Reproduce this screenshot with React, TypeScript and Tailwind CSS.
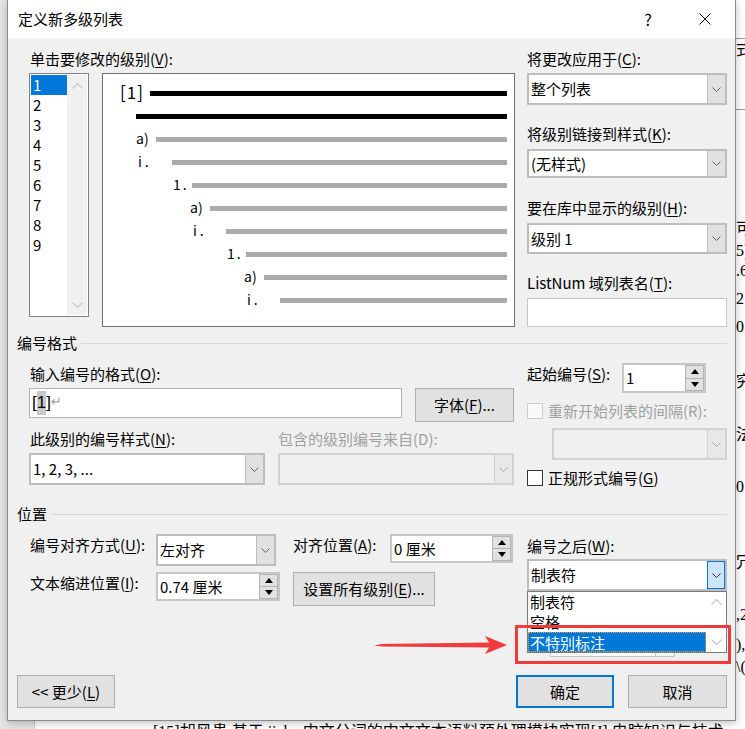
import React from "react";

const U = ({ children }: { children: React.ReactNode }) => (
  <span className="underline decoration-1 underline-offset-[2px]">{children}</span>
);

const Chev = ({ color = "#606060" }: { color?: string }) => (
  <svg width="9" height="5" viewBox="0 0 9 5">
    <path d="M0.5 0.5L4.5 4.5L8.5 0.5" fill="none" stroke={color} strokeWidth="1" />
  </svg>
);

const ChevUp = ({ color = "#c8c8c8" }: { color?: string }) => (
  <svg width="11" height="6" viewBox="0 0 11 6">
    <path d="M0.5 5.5L5.5 0.5L10.5 5.5" fill="none" stroke={color} strokeWidth="1.2" />
  </svg>
);

const ChevDown = ({ color = "#c8c8c8" }: { color?: string }) => (
  <svg width="11" height="6" viewBox="0 0 11 6">
    <path d="M0.5 0.5L5.5 5.5L10.5 0.5" fill="none" stroke={color} strokeWidth="1.2" />
  </svg>
);

const Tri = ({ up }: { up?: boolean }) => (
  <svg width="8" height="5" viewBox="0 0 8 5">
    {up ? <polygon points="0,5 8,5 4,0" fill="#000" /> : <polygon points="0,0 8,0 4,5" fill="#000" />}
  </svg>
);

function Label({ cls = "", children }: { cls?: string; children: React.ReactNode }) {
  return <div className={`h-[20px] leading-[20px] text-[15px] whitespace-nowrap ${cls}`}>{children}</div>;
}

function Combo({
  cls,
  text,
  disabled = false,
  active = false,
}: {
  cls: string;
  text?: string;
  disabled?: boolean;
  active?: boolean;
}) {
  return (
    <div className={`flex border-2 ${disabled ? "border-[#d2d2d2] bg-[#f0f0f0]" : "border-[#bdbdbd] bg-white"} ${cls}`}>
      <div className="flex-1 flex items-center pl-[2px] text-[15px] leading-[20px] whitespace-nowrap overflow-hidden">
        {text}
      </div>
      <div
        className={`w-[18px] flex items-center justify-center ${
          active
            ? "bg-[#cce4f7] border border-[#0078d7]"
            : disabled
            ? "bg-[#e8e8e8] border-l border-[#d2d2d2]"
            : "bg-[#e1e1e1] border-l border-[#bdbdbd]"
        }`}
      >
        <Chev color={disabled ? "#a8a8a8" : active ? "#303030" : "#606060"} />
      </div>
    </div>
  );
}

function Spin({ cls, text }: { cls: string; text: string }) {
  return (
    <div className={`flex border-2 border-[#c6c6c6] bg-white ${cls}`}>
      <div className="flex-1 flex items-center pl-[2px] text-[15px] leading-[20px] whitespace-nowrap">{text}</div>
      <div className="w-[19px] flex flex-col">
        <div className="flex-1 flex items-center justify-center bg-[#e1e1e1] border border-[#b4b4b4]">
          <Tri up />
        </div>
        <div className="flex-1 flex items-center justify-center bg-[#e1e1e1] border border-t-0 border-[#b4b4b4]">
          <Tri />
        </div>
      </div>
    </div>
  );
}

function Btn({ cls, children, primary = false }: { cls: string; children: React.ReactNode; primary?: boolean }) {
  return (
    <div
      className={`flex items-center justify-center bg-[#e1e1e1] text-[15px] leading-[20px] whitespace-nowrap ${
        primary ? "border-2 border-[#0078d7]" : "border border-[#adadad]"
      } ${cls}`}
    >
      {children}
    </div>
  );
}

function Section({ cls, title }: { cls: string; title: string }) {
  return (
    <div className={`flex items-center h-[20px] ${cls}`}>
      <span className="text-[15px] leading-[20px] whitespace-nowrap">{title}</span>
      <div className="flex-1 h-px bg-[#d7d7d7] ml-[4px]" />
    </div>
  );
}

const previewRows: { label: string; lx: string; dark: boolean; lcls: string }[] = [
  { label: "[1]", lx: "ml-[17px] w-[27px]", dark: true, lcls: "text-[17px] tracking-[1px]" },
  { label: "", lx: "ml-[33px] w-0", dark: true, lcls: "" },
  { label: "a)", lx: "ml-[33px] w-[20px]", dark: false, lcls: "text-[14px]" },
  { label: "i.", lx: "ml-[35px] w-[34px]", dark: false, lcls: "text-[14px] tracking-[3px]" },
  { label: "1.", lx: "ml-[70px] w-[19px]", dark: false, lcls: "text-[14px] tracking-[2px]" },
  { label: "a)", lx: "ml-[87px] w-[20px]", dark: false, lcls: "text-[14px]" },
  { label: "i.", lx: "ml-[90px] w-[33px]", dark: false, lcls: "text-[14px] tracking-[3px]" },
  { label: "1.", lx: "ml-[124px] w-[19px]", dark: false, lcls: "text-[14px] tracking-[2px]" },
  { label: "a)", lx: "ml-[141px] w-[20px]", dark: false, lcls: "text-[14px]" },
  { label: "i.", lx: "ml-[144px] w-[33px]", dark: false, lcls: "text-[14px] tracking-[3px]" },
];

function Preview() {
  return (
    <div className="ml-[13px] w-[413px] h-[254px] bg-white border border-[#707070] flex flex-col pt-[8px] pr-[7px]">
      {previewRows.map((r, i) => (
        <div key={i} className="h-[23px] flex items-center">
          <div className={`shrink-0 leading-[18px] -mt-[3px] whitespace-nowrap ${r.lx} ${r.lcls}`}>{r.label}</div>
          <div className={`flex-1 ${i === 0 ? "ml-[3px]" : ""} h-[5px] ${r.dark ? "bg-black" : "bg-[#ababab]"}`} />
        </div>
      ))}
    </div>
  );
}

function LevelList() {
  const items = ["1", "2", "3", "4", "5", "6", "7", "8", "9"];
  return (
    <div className="w-[60px] h-[244px] bg-white border border-[#828282] p-[1px] flex">
      <div className="w-[36px] flex flex-col">
        {items.map((n, i) => (
          <div
            key={n}
            className={`h-[20px] leading-[20px] text-[15px] pl-[2px] ${i === 0 ? "bg-[#0078d7] text-white" : ""}`}
          >
            {n}
          </div>
        ))}
      </div>
      <div className="flex-1 bg-[#f0f0f0] flex flex-col items-center justify-between pt-[8px] pb-[7px]">
        <ChevUp />
        <ChevDown />
      </div>
    </div>
  );
}

const stripItems: { t: string; cls: string }[] = [
  { t: "式", cls: "top-[41px]" },
  { t: "可", cls: "top-[220px]" },
  { t: "5)", cls: "top-[242px]" },
  { t: ".6", cls: "top-[262px]" },
  { t: "2", cls: "top-[290px]" },
  { t: "0.", cls: "top-[318px]" },
  { t: "究", cls: "top-[373px]" },
  { t: "法", cls: "top-[426px]" },
  { t: "0", cls: "top-[478px]" },
  { t: "冗", cls: "top-[554px]" },
  { t: ",2", cls: "top-[606px]" },
  { t: "),", cls: "top-[636px]" },
  { t: "\\(", cls: "top-[658px]" },
];

export default function App() {
  return (
    <div className="relative w-[745px] h-[729px] overflow-hidden bg-white text-black font-['Noto_Sans_CJK_SC','Noto_Sans','DejaVu_Sans',sans-serif]">
      {/* document behind the dialog */}
      <div className="absolute left-0 top-0 w-[35px] h-full bg-[#e6e6e6] border-r border-[#c8c8c8]" />
      <div className="absolute left-[736px] top-[38px] w-[9px] h-px bg-[#9a9a9a]" />
      <div className="absolute left-[736px] top-[109px] w-[9px] h-px bg-[#9a9a9a]" />
      {stripItems.map((s, i) => (
        <div
          key={i}
          className={`absolute left-[736px] ${s.cls} text-[16px] leading-[18px] whitespace-nowrap font-['Liberation_Serif','Noto_Sans_CJK_SC',serif]`}
        >
          {s.t}
        </div>
      ))}
      <div className="absolute left-[153px] top-[722px] whitespace-nowrap text-[16px] leading-[20px] font-['Liberation_Serif','Noto_Sans_CJK_SC',serif]">
        [15]胡风贵.基于 jieba 中文分词的中文文本语料预处理模块实现[J].电脑知识与技术
      </div>

      {/* dialog */}
      <div className="absolute left-[7px] top-0 w-[729px] h-[721px] bg-[#f0f0f0] border-x border-b border-[#8a8a8a] shadow-[0_2px_8px_rgba(0,0,0,0.25)] flex flex-col">
        {/* title bar */}
        <div className="h-[38px] bg-white flex items-center pl-[10px] pr-[10px]">
          <span className="text-[15px] leading-[20px]">定义新多级列表</span>
          <div className="ml-auto w-[40px] h-full flex items-center justify-center text-[16px]">?</div>
          <div className="ml-[17px] w-[40px] h-full flex items-center justify-center">
            <svg width="12" height="12" viewBox="0 0 12 12">
              <path d="M0.5 0.5L11.5 11.5M11.5 0.5L0.5 11.5" stroke="#000" strokeWidth="1" />
            </svg>
          </div>
        </div>

        {/* body */}
        <div className="flex flex-col pl-[9px] pr-[8px]">
          {/* top area */}
          <div className="flex mt-[11px]">
            <div className="ml-[12px] w-[486px] flex flex-col">
              <Label cls="pl-[1px]">
                单击要修改的级别(<U>V</U>):
              </Label>
              <div className="flex mt-[4px] items-start">
                <LevelList />
                <Preview />
              </div>
            </div>
            <div className="ml-[12px] w-[200px] flex flex-col">
              <Label>
                将更改应用于(<U>C</U>):
              </Label>
              <Combo cls="mt-[4px] h-[32px]" text="整个列表" />
              <Label cls="mt-[19px]">
                将级别链接到样式(<U>K</U>):
              </Label>
              <Combo cls="mt-[5px] h-[29px]" text="(无样式)" />
              <Label cls="mt-[20px]">
                要在库中显示的级别(<U>H</U>):
              </Label>
              <Combo cls="mt-[5px] h-[31px]" text="级别 1" />
              <Label cls="mt-[19px]">
                ListNum 域列表名(<U>T</U>):
              </Label>
              <div className="mt-[5px] h-[29px] bg-white border border-[#c6c6c6]" />
            </div>
          </div>

          <Section cls="mt-[6px]" title="编号格式" />

          {/* numbering format */}
          <div className="flex">
            <div className="ml-[12px] w-[486px] flex flex-col">
              <Label cls="mt-[11px] pl-[1px]">
                输入编号的格式(<U>O</U>):
              </Label>
              <div className="flex items-start mt-[4px]">
                <div className="w-[373px] h-[30px] bg-white border border-[#b4b4b4] flex items-center pl-[2px]">
                  <span className="text-[17px] leading-[24px] font-['Liberation_Sans','Noto_Sans_CJK_SC',sans-serif]">[</span>
                  <span className="text-[17px] leading-[24px] bg-[#c8c8c8] font-['Liberation_Sans','Noto_Sans_CJK_SC',sans-serif]">1</span>
                  <span className="text-[17px] leading-[24px] font-['Liberation_Sans','Noto_Sans_CJK_SC',sans-serif]">]</span>
                  <span className="text-[13px] leading-[24px] text-[#9a9a9a] -mt-[2px] font-['DejaVu_Sans',sans-serif]">↵</span>
                </div>
                <Btn cls="ml-[13px] w-[99px] h-[34px]">
                  字体(<U>F</U>)...
                </Btn>
              </div>
              <div className="flex mt-[7px]">
                <Label cls="w-[249px] pl-[1px]">
                  此级别的编号样式(<U>N</U>):
                </Label>
                <Label cls="text-[#a0a0a0]">包含的级别编号来自(D):</Label>
              </div>
              <div className="flex mt-[4px]">
                <Combo cls="w-[236px] h-[32px]" text="1, 2, 3, ..." />
                <Combo cls="ml-[13px] w-[236px] h-[32px]" disabled />
              </div>
            </div>
            <div className="ml-[12px] w-[200px] flex flex-col">
              <div className="flex items-start mt-[10px]">
                <Label cls="w-[95px] mt-[1px]">
                  起始编号(<U>S</U>):
                </Label>
                <Spin cls="w-[84px] h-[30px]" text="1" />
              </div>
              <div className="flex items-center h-[16px] mt-[10px]">
                <div className="w-[16px] h-[16px] border border-[#cccccc] bg-[#fafafa] shrink-0" />
                <Label cls="ml-[5px] text-[#a0a0a0]">重新开始列表的间隔(R):</Label>
              </div>
              <Combo cls="ml-[25px] mt-[9px] w-[175px] h-[32px]" disabled />
              <div className="flex items-center h-[16px] mt-[10px]">
                <div className="w-[16px] h-[16px] border border-[#333333] bg-white shrink-0" />
                <Label cls="ml-[5px]">
                  正规形式编号(<U>G</U>)
                </Label>
              </div>
            </div>
          </div>

          <Section cls="mt-[18px]" title="位置" />

          {/* position */}
          <div className="flex">
            <div className="ml-[12px] w-[486px] flex flex-col">
              <div className="flex items-start mt-[10px]">
                <Label cls="w-[127px] pl-[1px] mt-[1px]">
                  编号对齐方式(<U>U</U>):
                </Label>
                <Combo cls="w-[120px] h-[32px]" text="左对齐" />
                <Label cls="ml-[17px] w-[97px] mt-[1px]">
                  对齐位置(<U>A</U>):
                </Label>
                <Spin cls="w-[123px] h-[29px]" text="0 厘米" />
              </div>
              <div className="flex items-start mt-[6px]">
                <Label cls="w-[127px] pl-[1px] mt-[1px]">
                  文本缩进位置(<U>I</U>):
                </Label>
                <Spin cls="w-[124px] h-[29px]" text="0.74 厘米" />
                <Btn cls="ml-[13px] w-[142px] h-[34px]">
                  设置所有级别(<U>E</U>)...
                </Btn>
              </div>
            </div>
            <div className="ml-[12px] w-[200px] flex flex-col">
              <Label cls="mt-[12px]">
                编号之后(<U>W</U>):
              </Label>
              <Combo cls="mt-[3px] h-[32px]" text="制表符" active />
              <div className="ml-[23px] mt-[37px] w-[125px] h-[29px] bg-white border border-[#c6c6c6] flex justify-end">
                <div className="w-[19px] h-full border-l border-[#c6c6c6] bg-[#f4f4f4]" />
              </div>
            </div>
          </div>

          {/* bottom buttons */}
          <div className="flex mt-[18px]">
            <Btn cls="w-[98px] h-[33px]">
              &lt;&lt; 更少(<U>L</U>)
            </Btn>
            <Btn cls="ml-auto w-[98px] h-[33px]" primary>
              确定
            </Btn>
            <Btn cls="ml-[14px] w-[99px] h-[33px]">取消</Btn>
          </div>
        </div>
      </div>

      {/* open dropdown list */}
      <div className="absolute left-[527px] top-[591px] w-[200px] h-[62px] bg-white border border-[#7a7a7a] flex">
        <div className="w-[178px] flex flex-col">
          <div className="h-[20px] leading-[20px] text-[15px] pl-[2px]">制表符</div>
          <div className="h-[20px] leading-[20px] text-[15px] pl-[2px]">空格</div>
          <div className="h-[20px] leading-[19px] text-[15px] pl-[1px] bg-[#0078d7] text-white border border-dotted border-[#f0a040]">
            不特别标注
          </div>
        </div>
        <div className="flex-1 flex flex-col items-center justify-between pt-[7px] pb-[7px]">
          <ChevUp />
          <ChevDown />
        </div>
      </div>

      {/* red highlight box */}
      <div className="absolute left-[515px] top-[625px] w-[216px] h-[39px] border-[3px] border-[#ef3b3b]" />

      {/* red arrow */}
      <svg className="absolute left-[370px] top-[632px]" width="140" height="26" viewBox="0 0 140 26">
        <polygon
          points="4,13.4 12,11.9 119,10.6 115,4 137,13 115,22 119,15.6 12,14.6"
          fill="#ef3b3b"
        />
      </svg>
    </div>
  );
}
